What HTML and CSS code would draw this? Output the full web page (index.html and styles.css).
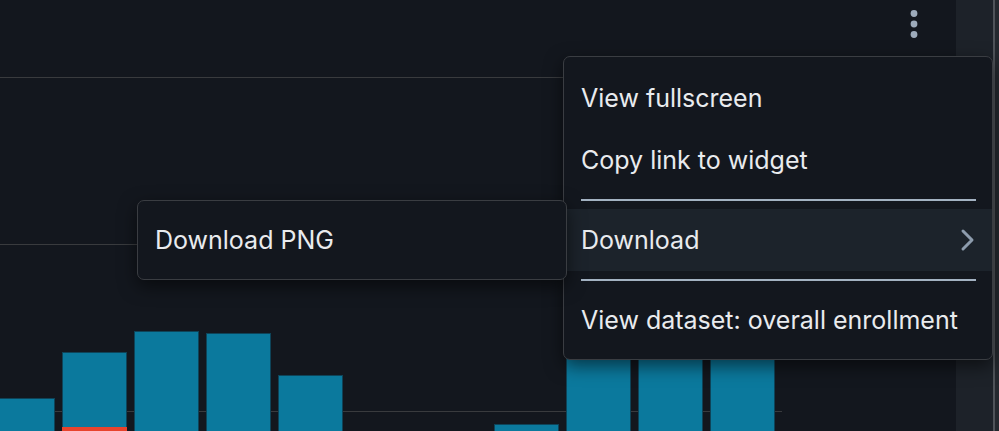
FILE: index.html
```html
<!DOCTYPE html>
<html lang="en">
<head>
<meta charset="utf-8">
<title>Widget menu</title>
<link rel="stylesheet" href="styles.css">
</head>
<body>
<div class="page">
  <div class="chart">
    <div class="chart-header">
      <button class="kebab" aria-label="More options">
        <svg width="8" height="28" viewBox="0 0 8 28"><circle cx="4" cy="3.5" r="3.4" fill="#9dabbb"/><circle cx="4" cy="14" r="3.4" fill="#9dabbb"/><circle cx="4" cy="24.5" r="3.4" fill="#9dabbb"/></svg>
      </button>
    </div>
    <div class="plot">
      <div class="grid-row"></div>
      <div class="grid-row"></div>
      <div class="grid-row last"></div>
      <div class="bars">
        <div class="bar" style="height:33px"></div>
        <div class="bar stacked" style="height:79px"><div class="bar-seg"></div></div>
        <div class="bar" style="height:100px"></div>
        <div class="bar" style="height:98px"></div>
        <div class="bar" style="height:56px"></div>
        <div class="bar empty"></div>
        <div class="bar empty"></div>
        <div class="bar" style="height:7px"></div>
        <div class="bar" style="height:92px"></div>
        <div class="bar" style="height:100px"></div>
        <div class="bar" style="height:88px"></div>
      </div>
    </div>
    <div class="menu main-menu">
      <div class="menu-item">View fullscreen</div>
      <div class="menu-item">Copy link to widget</div>
      <div class="menu-divider"></div>
      <div class="menu-item active">
        <span>Download</span>
        <svg class="chevron" width="15" height="24" viewBox="0 0 15 24"><path d="M3 3 L12 12 L3 21" fill="none" stroke="#8d9cad" stroke-width="3" stroke-linecap="round" stroke-linejoin="round"/></svg>
      </div>
      <div class="menu-divider"></div>
      <div class="menu-item">View dataset: overall enrollment</div>
    </div>
    <div class="menu sub-menu">
      <div class="menu-item">Download PNG</div>
    </div>
  </div>
  <div class="strip">
    <div class="strip-fill"></div>
    <div class="strip-edge"></div>
    <div class="strip-tail"></div>
  </div>
</div>
</body>
</html>
```
FILE: styles.css
```css
* { box-sizing: border-box; }
html, body {
  margin: 0;
  padding: 0;
  background: #13171e;
  width: 999px;
  height: 431px;
  overflow: hidden;
  font-family: Inter, "Noto Sans", "Liberation Sans", sans-serif;
}
.page {
  display: flex;
  width: 999px;
  height: 431px;
}
.chart {
  position: relative;
  width: 956px;
  height: 431px;
}
.chart-header {
  height: 77px;
  display: flex;
  justify-content: flex-end;
  align-items: flex-start;
  padding: 10px 38px 0 0;
}
.kebab {
  border: 0;
  padding: 0;
  margin: 0;
  background: none;
  display: block;
  line-height: 0;
}
.plot {
  position: relative;
  width: 782px;
  height: 354px;
  display: flex;
  flex-direction: column;
}
.grid-row {
  height: 167px;
  flex: none;
  border-top: 1.5px solid #393b3e;
}
.grid-row.last {
  flex: 1;
  height: auto;
}
.bars {
  position: absolute;
  left: -10px;
  bottom: 0;
  display: flex;
  align-items: flex-end;
  gap: 7px;
}
.bar {
  width: 65px;
  background: #0b799d;
  border: 1px solid #0e4459;
  border-bottom: 0;
  position: relative;
}
.bar.empty { height: 0; border: 0; }
.bar-seg {
  position: absolute;
  left: -1px;
  right: -1px;
  bottom: 0;
  height: 4px;
  background: #e8432c;
}
.menu {
  position: absolute;
  width: 430px;
  background: #13171e;
  border: 1px solid #3a3d42;
  border-radius: 7px;
  padding: 8px 0;
  box-shadow: 0 6px 18px rgba(0, 0, 0, 0.55);
  color: #e9ebee;
  font-size: 25px;
}
.main-menu {
  left: 563px;
  top: 56px;
  padding-top: 10px;
}
.sub-menu {
  left: 137px;
  top: 200px;
}
.menu-item {
  height: 62px;
  display: flex;
  align-items: center;
  justify-content: space-between;
  padding: 0 17px 0 17px;
  white-space: nowrap;
}
.menu-item.active {
  background: #1c232b;
}
.chevron { display: block; }
.menu-divider {
  height: 2px;
  margin: 8px 16px 8px 17px;
  background: #a3b2c2;
}
.strip {
  display: flex;
  width: 43px;
  height: 431px;
}
.strip-fill { flex: 1; background: #1d2229; }
.strip-edge { width: 2px; background: #4f5359; }
.strip-tail { width: 4px; background: #24282e; }
```
